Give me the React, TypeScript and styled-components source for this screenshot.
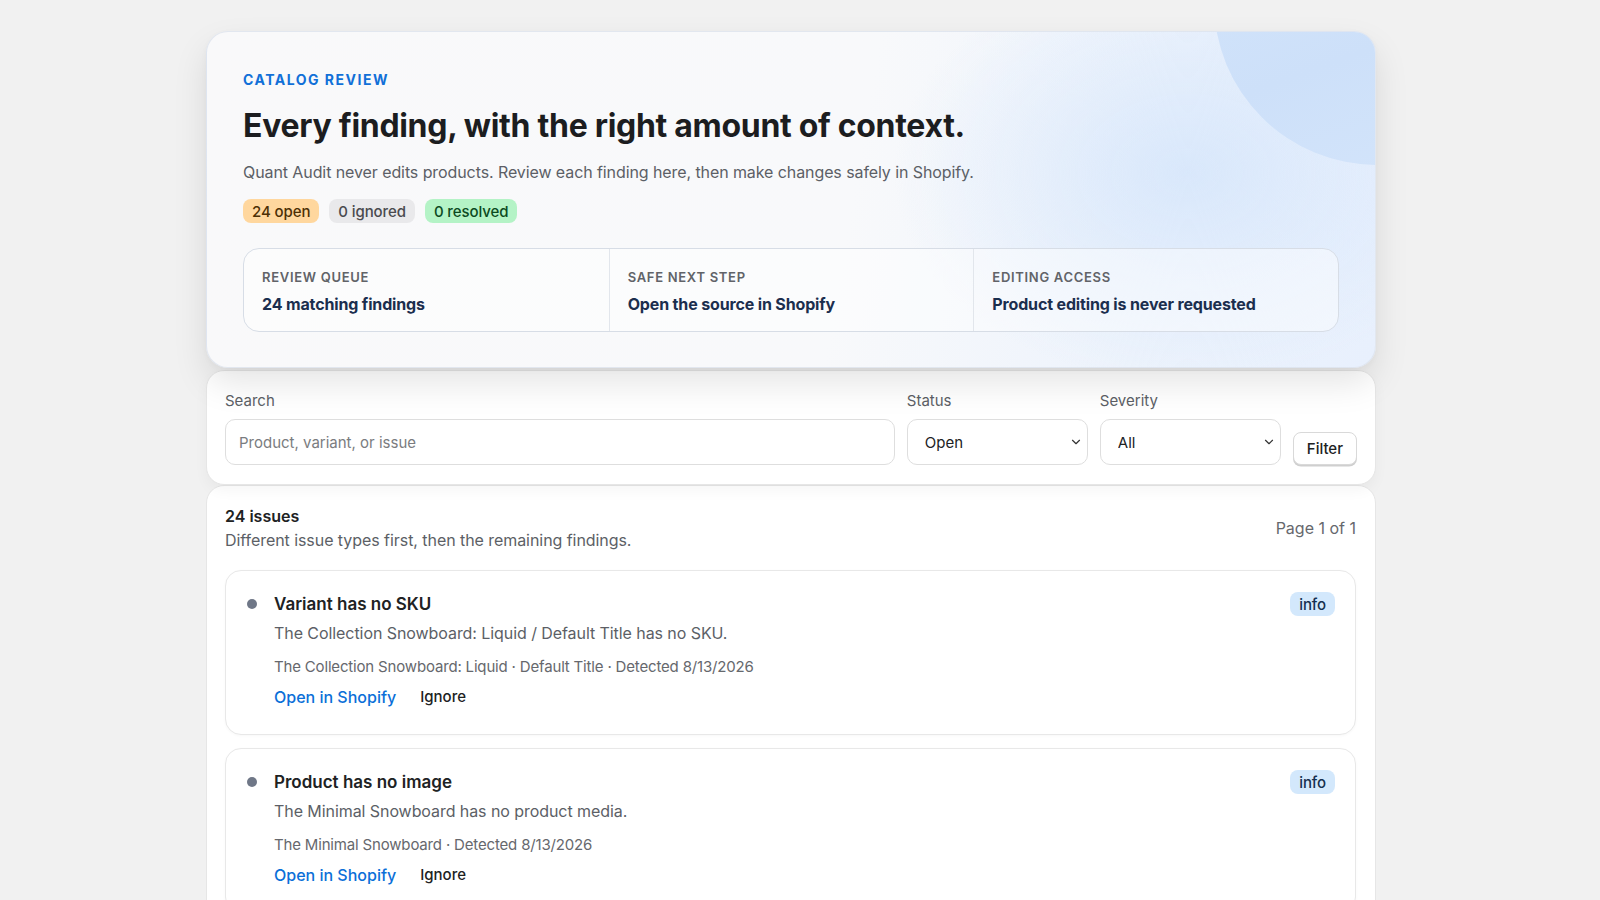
import React from "react";
import styled, { createGlobalStyle } from "styled-components";
import { ChevronDown } from "lucide-react";

const GlobalStyle = createGlobalStyle`
  * { box-sizing: border-box; }
  html, body { margin: 0; padding: 0; }
  body {
    background: #f1f1f1;
    font-family: Inter, "Noto Sans", "Liberation Sans", sans-serif;
    color: #202223;
    -webkit-font-smoothing: antialiased;
  }
`;

const Page = styled.main`
  padding: 31px 18px 40px 0;
`;

const Column = styled.div`
  width: 1170px;
  margin: 0 auto;
  display: flex;
  flex-direction: column;
`;

const Hero = styled.section`
  position: relative;
  z-index: 2;
  overflow: hidden;
  border-radius: 22px;
  border: 1px solid rgba(220, 226, 236, 0.8);
  padding: 39px 36px 35px 36px;
  background:
    radial-gradient(ellipse 420px 300px at 84% 42%, rgba(212, 229, 251, 0.8), rgba(212, 229, 251, 0) 70%),
    linear-gradient(100deg, #f9f9fa 0%, #f8f9fb 55%, #edf3fc 80%, #e8f0fd 100%);
  box-shadow: 0 16px 34px rgba(0, 0, 0, 0.1), 0 2px 6px rgba(0, 0, 0, 0.03);
`;

const Orb = styled.div`
  position: absolute;
  width: 326px;
  height: 326px;
  border-radius: 50%;
  right: -165px;
  top: -193px;
  background: linear-gradient(160deg, #d6e7fc 0%, #cde0f9 60%, #d4e5fb 100%);
  pointer-events: none;
`;

const HeroBody = styled.div`
  position: relative;
  display: flex;
  flex-direction: column;
  align-items: flex-start;
`;

const Eyebrow = styled.div`
  font-size: 14px;
  line-height: 18px;
  font-weight: 700;
  letter-spacing: 1.5px;
  color: #1170d8;
  text-transform: uppercase;
`;

const Title = styled.h1`
  margin: 17px 0 0;
  font-size: 32px;
  line-height: 40px;
  font-weight: 700;
  letter-spacing: -0.3px;
  color: #1c1d1f;
`;

const Lede = styled.p`
  margin: 14px 0 0;
  font-size: 16px;
  line-height: 24px;
  letter-spacing: -0.09px;
  color: #5c5f66;
`;

const Chips = styled.div`
  margin-top: 15px;
  display: flex;
  gap: 10px;
`;

const chipTones = {
  open: { bg: "#ffd79e", fg: "#4d2f05" },
  ignored: { bg: "#e9e9eb", fg: "#4a4b4f" },
  resolved: { bg: "#b4f3c6", fg: "#0c4a22" },
  info: { bg: "#d3e8fc", fg: "#15304f" },
} as const;

type Tone = keyof typeof chipTones;

const Chip = styled.span<{ $tone: Tone }>`
  display: inline-flex;
  align-items: center;
  height: 24px;
  padding: 0 9px;
  border-radius: 8px;
  font-size: 15px;
  font-weight: 500;
  letter-spacing: -0.1px;
  background: ${(p) => chipTones[p.$tone].bg};
  color: ${(p) => chipTones[p.$tone].fg};
`;

const Facts = styled.div`
  margin-top: 25px;
  align-self: stretch;
  display: grid;
  grid-template-columns: repeat(3, 1fr);
  border: 1.5px solid #d7dde6;
  border-radius: 16px;
  background: rgba(255, 255, 255, 0.45);
  overflow: hidden;
`;

const Fact = styled.div`
  padding: 19px 18px 16px;
  display: flex;
  flex-direction: column;
  gap: 7px;
  & + & {
    border-left: 1.5px solid #e2e6ec;
  }
`;

const FactLabel = styled.div`
  font-size: 13px;
  line-height: 18px;
  font-weight: 600;
  letter-spacing: 0.7px;
  color: #616368;
  text-transform: uppercase;
`;

const FactValue = styled.div`
  font-size: 16px;
  line-height: 22px;
  font-weight: 700;
  letter-spacing: -0.15px;
  color: #1b2e4e;
`;

const FilterPanel = styled.form`
  position: relative;
  z-index: 1;
  margin-top: 2px;
  border-radius: 18px;
  border: 1px solid #e6e6e6;
  background: #fff;
  padding: 20px 18px 19px;
  display: grid;
  grid-template-columns: 1fr 181px 181px auto;
  column-gap: 12px;
  align-items: end;
  box-shadow: 0 6px 14px rgba(0, 0, 0, 0.04);
`;

const Field = styled.label`
  display: flex;
  flex-direction: column;
  gap: 8px;
`;

const FieldLabel = styled.span`
  font-size: 15px;
  line-height: 20px;
  color: #5c5f66;
`;

const TextInput = styled.input`
  height: 46px;
  border: 1.5px solid #dedede;
  border-radius: 10px;
  padding: 0 13px;
  font: inherit;
  font-size: 15px;
  color: #202223;
  background: #fff;
  &::placeholder { color: #7a7c80; }
`;

const SelectWrap = styled.div`
  position: relative;
  & svg {
    position: absolute;
    right: 5px;
    top: 16px;
    color: #333;
    pointer-events: none;
  }
`;

const Select = styled.select`
  width: 100%;
  height: 46px;
  appearance: none;
  border: 1.5px solid #dedede;
  border-radius: 10px;
  padding: 0 30px 0 17px;
  font: inherit;
  font-size: 15px;
  color: #202223;
  background: #fff;
`;

const FilterButton = styled.button`
  height: 33px;
  padding: 0 13px;
  border: 1px solid #d9d9d9;
  border-radius: 8px;
  background: #fff;
  font: inherit;
  font-size: 15px;
  font-weight: 500;
  color: #202223;
  box-shadow: 0 1.5px 0 #cfcfcf;
  cursor: pointer;
`;

const Results = styled.section`
  border-radius: 18px;
  border: 1px solid #e6e6e6;
  background: #fff;
  padding: 19px 19px 24px 18px;
  display: flex;
  flex-direction: column;
  gap: 19px;
`;

const ResultsHead = styled.div`
  display: flex;
  align-items: center;
  justify-content: space-between;
`;

const Count = styled.div`
  font-size: 16px;
  line-height: 22px;
  font-weight: 600;
  color: #202223;
`;

const Sub = styled.div`
  margin-top: 2px;
  font-size: 16px;
  line-height: 22px;
  letter-spacing: -0.06px;
  color: #5c5f66;
`;

const Pager = styled.div`
  font-size: 16px;
  color: #66686d;
`;

const List = styled.div`
  display: flex;
  flex-direction: column;
  gap: 13px;
`;

const Card = styled.article`
  border: 1.5px solid #e8e8e8;
  border-radius: 16px;
  background: #fff;
  padding: 21px 20px 26px 21px;
  display: grid;
  grid-template-columns: 10px 1fr auto;
  column-gap: 17px;
  box-shadow: 0 1px 3px rgba(0, 0, 0, 0.03);
`;

const Dot = styled.span`
  width: 10px;
  height: 10px;
  border-radius: 50%;
  background: #6f7787;
  margin-top: 7px;
`;

const CardBody = styled.div`
  display: flex;
  flex-direction: column;
`;

const CardTitle = styled.h3`
  margin: 0;
  font-size: 17px;
  line-height: 24px;
  font-weight: 600;
  color: #202223;
`;

const CardText = styled.p`
  margin: 5px 0 0;
  font-size: 16px;
  line-height: 24px;
  letter-spacing: -0.07px;
  color: #5c5f66;
`;

const Meta = styled.div`
  margin-top: 11px;
  font-size: 15px;
  line-height: 22px;
  letter-spacing: -0.17px;
  color: #66686d;
`;

const Actions = styled.div`
  margin-top: 8px;
  display: flex;
  align-items: center;
  gap: 24px;
`;

const ActionLink = styled.a`
  font-size: 16px;
  line-height: 22px;
  font-weight: 500;
  color: #0b6fd8;
  text-decoration: none;
`;

const ActionButton = styled.button`
  border: 0;
  background: none;
  padding: 0;
  font: inherit;
  font-size: 15px;
  line-height: 22px;
  font-weight: 500;
  color: #202223;
  cursor: pointer;
`;

const issues = [
  {
    title: "Variant has no SKU",
    text: "The Collection Snowboard: Liquid / Default Title has no SKU.",
    meta: "The Collection Snowboard: Liquid · Default Title · Detected 8/13/2026",
  },
  {
    title: "Product has no image",
    text: "The Minimal Snowboard has no product media.",
    meta: "The Minimal Snowboard · Detected 8/13/2026",
  },
  {
    title: "Product has no description",
    text: "The Hidden Snowboard has an empty description.",
    meta: "The Hidden Snowboard · Detected 8/13/2026",
  },
];

const facts = [
  { label: "Review queue", value: "24 matching findings" },
  { label: "Safe next step", value: "Open the source in Shopify" },
  { label: "Editing access", value: "Product editing is never requested" },
];

export default function App() {
  return (
    <>
      <GlobalStyle />
      <Page>
        <Column>
          <Hero>
            <Orb />
            <HeroBody>
              <Eyebrow>Catalog review</Eyebrow>
              <Title>Every finding, with the right amount of context.</Title>
              <Lede>
                Quant Audit never edits products. Review each finding here, then make changes safely in Shopify.
              </Lede>
              <Chips>
                <Chip $tone="open">24 open</Chip>
                <Chip $tone="ignored">0 ignored</Chip>
                <Chip $tone="resolved">0 resolved</Chip>
              </Chips>
              <Facts>
                {facts.map((f) => (
                  <Fact key={f.label}>
                    <FactLabel>{f.label}</FactLabel>
                    <FactValue>{f.value}</FactValue>
                  </Fact>
                ))}
              </Facts>
            </HeroBody>
          </Hero>

          <FilterPanel onSubmit={(e) => e.preventDefault()}>
            <Field>
              <FieldLabel>Search</FieldLabel>
              <TextInput placeholder="Product, variant, or issue" />
            </Field>
            <Field>
              <FieldLabel>Status</FieldLabel>
              <SelectWrap>
                <Select defaultValue="open">
                  <option value="open">Open</option>
                  <option value="ignored">Ignored</option>
                  <option value="resolved">Resolved</option>
                </Select>
                <ChevronDown size={14} strokeWidth={2} />
              </SelectWrap>
            </Field>
            <Field>
              <FieldLabel>Severity</FieldLabel>
              <SelectWrap>
                <Select defaultValue="all">
                  <option value="all">All</option>
                  <option value="critical">Critical</option>
                  <option value="warning">Warning</option>
                  <option value="info">Info</option>
                </Select>
                <ChevronDown size={14} strokeWidth={2} />
              </SelectWrap>
            </Field>
            <FilterButton type="submit">Filter</FilterButton>
          </FilterPanel>

          <Results>
            <ResultsHead>
              <div>
                <Count>24 issues</Count>
                <Sub>Different issue types first, then the remaining findings.</Sub>
              </div>
              <Pager>Page 1 of 1</Pager>
            </ResultsHead>
            <List>
              {issues.map((it) => (
                <Card key={it.title}>
                  <Dot />
                  <CardBody>
                    <CardTitle>{it.title}</CardTitle>
                    <CardText>{it.text}</CardText>
                    <Meta>{it.meta}</Meta>
                    <Actions>
                      <ActionLink href="#">Open in Shopify</ActionLink>
                      <ActionButton type="button">Ignore</ActionButton>
                    </Actions>
                  </CardBody>
                  <div>
                    <Chip $tone="info">info</Chip>
                  </div>
                </Card>
              ))}
            </List>
          </Results>
        </Column>
      </Page>
    </>
  );
}
